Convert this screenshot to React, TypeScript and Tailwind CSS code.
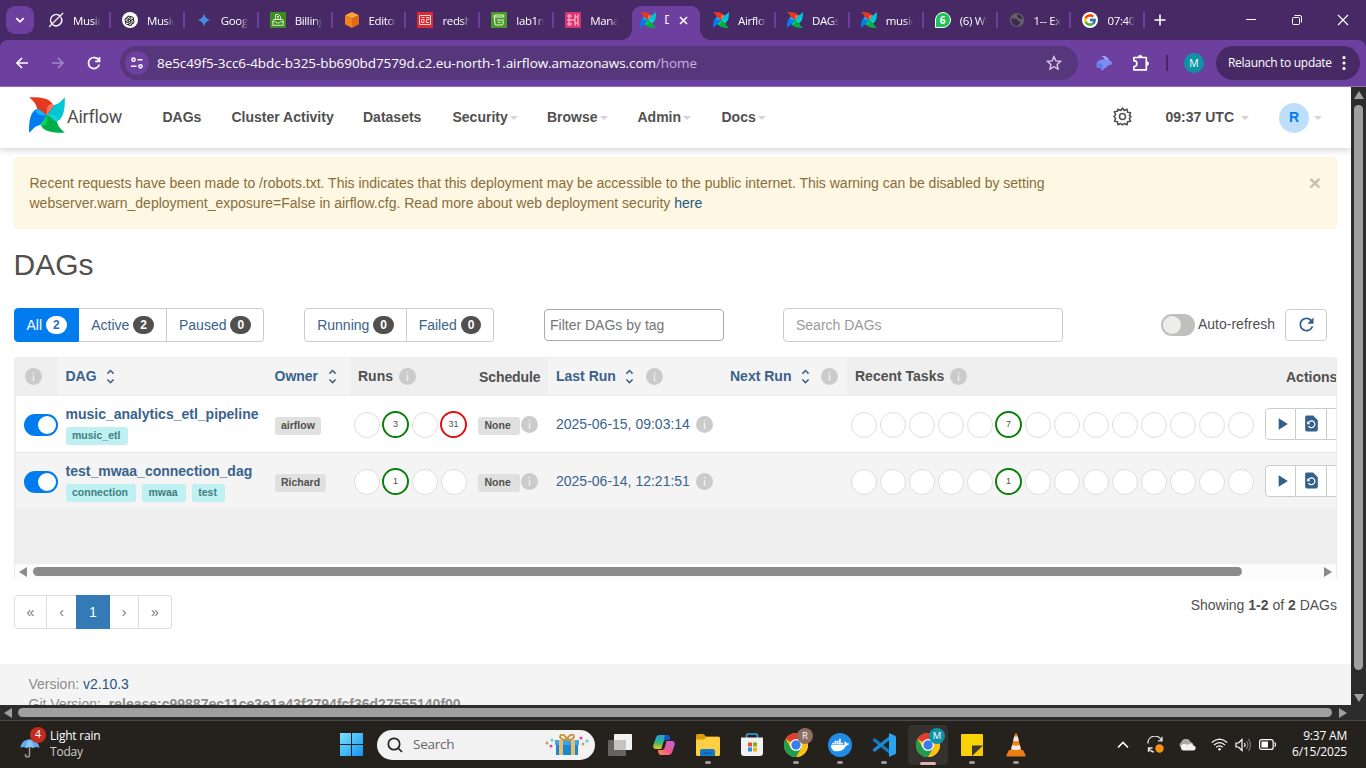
import type { ReactNode } from "react";
import { AiOutlineOpenAI } from "react-icons/ai";
import { FaDocker } from "react-icons/fa";
import { FcGoogle } from "react-icons/fc";
import { MdPlayArrow, MdRefresh, MdRestorePage, MdUnfoldMore } from "react-icons/md";

const blade = "M.2.2C9 0 22 .2 24.600 9L18 18C12 15.500 8.300 13.500 7.500 9.500 6.500 5.500 3.500 3.700.2.2Z";
const facet = "M18.600 9.500C20.500 7 23.500 5.500 24.600 9 22.500 12 20 14 18 18 17.600 14.500 17.800 12 18.600 9.500Z";

function Pinwheel({ className }: { className: string }) {
  return (
    <svg className={className} viewBox="0 0 36 36">
      <path fill="#00c7d4" d={blade} transform="rotate(90 18 18)" />
      <path fill="#00ad46" d={blade} transform="rotate(180 18 18)" />
      <path fill="#017cee" d={blade} transform="rotate(270 18 18)" />
      <path fill="#e43921" d={blade} />
      <path fill="#11d3e0" d={facet} transform="rotate(90 18 18)" />
      <path fill="#04d659" d={facet} transform="rotate(180 18 18)" />
      <path fill="#0cb6ff" d={facet} transform="rotate(270 18 18)" />
      <path fill="#ff7557" d={facet} />
    </svg>
  );
}

/* ---------- browser tabs ---------- */

const pin = <Pinwheel className="size-4" />;

const tabs: { icon: ReactNode; label: string; sep: boolean }[] = [
  {
    icon: (
      <svg className="size-4" viewBox="0 0 16 16" fill="none" stroke="#f2edf7" strokeWidth="1.600" strokeLinecap="round">
        <path d="M12.1 4.100A5.600 5.600 0 0 0 3.900 11.700M13.100 5.600A5.600 5.600 0 0 1 5 12.800" />
        <path d="M1.500 14.500 14.800 1.200" strokeWidth="1.300" />
      </svg>
    ),
    label: "Music",
    sep: true,
  },
  {
    icon: (
      <span className="flex size-4 items-center justify-center rounded-full bg-white text-black">
        <AiOutlineOpenAI className="size-[13px]" />
      </span>
    ),
    label: "Music",
    sep: true,
  },
  {
    icon: (
      <svg className="size-4" viewBox="0 0 16 16">
        <path d="M8 1.200C8.800 5.200 10.800 7.200 14.800 8 10.800 8.800 8.800 10.800 8 14.800 7.200 10.800 5.200 8.800 1.200 8 5.200 7.200 7.200 5.200 8 1.200Z" fill="#4a8ae0" />
      </svg>
    ),
    label: "Goog",
    sep: true,
  },
  {
    icon: (
      <svg className="size-4" viewBox="0 0 16 16" fill="none" stroke="#e6f5dc" strokeWidth="0.9">
        <rect width="16" height="16" fill="#3f8a22" stroke="none" />
        <path d="M5.500 7V2.500h3l2 2V7M3.500 7.500h9l.8 2v3.800H2.700V9.500ZM2.700 9.800h3l1 1.200h2.600l1-1.200h3M7 4.500h2M7 6h2" />
      </svg>
    ),
    label: "Billing",
    sep: true,
  },
  {
    icon: (
      <svg className="size-4" viewBox="0 0 16 16">
        <path d="M8 0 15 3.300 8 6.600 1 3.300Z" fill="#fba53d" />
        <path d="M1 3.300 8 6.600V16L1 12.300Z" fill="#f58220" />
        <path d="M15 3.300 8 6.600V16l7-3.700Z" fill="#dd6b14" />
      </svg>
    ),
    label: "Editor",
    sep: true,
  },
  {
    icon: (
      <svg className="size-4" viewBox="0 0 16 16" fill="none" stroke="#ffe3e3" strokeWidth="0.9">
        <rect width="16" height="16" fill="#d92b32" stroke="none" />
        <path d="M2.500 3.500h11v9h-11ZM4.500 5.500h3M5 7.500h2v3H4.500M9 5.500h3v2H9.500v3H12M4.500 7.500v3" />
      </svg>
    ),
    label: "redsh",
    sep: true,
  },
  {
    icon: (
      <svg className="size-4" viewBox="0 0 16 16" fill="none" stroke="#e6f5dc" strokeWidth="1.100">
        <rect width="16" height="16" fill="#4b9a28" stroke="none" />
        <path d="M3 4q0-1 1.500-1h7Q13 3 13 4T11.500 5h-7Q3 5 3 4ZM3.200 4.500l.8 7q.2 1.500 1.500 1.500h5q1.300 0 1.500-1.500l.2-2.500M6 8h7M7 10.300h2.500" />
      </svg>
    ),
    label: "lab1m",
    sep: true,
  },
  {
    icon: (
      <svg className="size-4" viewBox="0 0 16 16" fill="none" stroke="#ffe0ee" strokeWidth="0.9">
        <rect width="16" height="16" fill="#d8326f" stroke="none" />
        <path d="M10 2v12M13 2v12M10 5h3M10 8H5M10 11h3M3 3h3v2H3ZM3 7h2v2H3ZM3 11h3v2H3Z" />
      </svg>
    ),
    label: "Mana",
    sep: false,
  },
  { icon: pin, label: "DAGs", sep: false },
  { icon: pin, label: "Airflow", sep: true },
  { icon: pin, label: "DAGs", sep: true },
  { icon: pin, label: "music", sep: true },
  {
    icon: (
      <span className="flex size-4 items-center justify-center rounded-full rounded-bl-[3px] border border-white bg-[#1fc256] font-['Open_Sans',sans-serif] text-[10px] leading-none font-bold text-white">
        6
      </span>
    ),
    label: "(6) Wh",
    sep: true,
  },
  {
    icon: (
      <svg className="size-4" viewBox="0 0 16 16">
        <circle cx="8" cy="8" r="7" fill="#64606a" />
        <path d="M2.500 6.500c2-1 3.500.500 5 .500s1 2.500 3 2.500-.500 4-2.500 4.500C4.500 14 2 11 2.500 6.500ZM8 2.500c2-.5 5 1.500 5.500 4C11.500 8 10 6 8.500 5.500Z" fill="#3c2c4c" />
      </svg>
    ),
    label: "1-- Ex",
    sep: true,
  },
  {
    icon: (
      <span className="flex size-4 items-center justify-center rounded-full bg-white">
        <FcGoogle className="size-[14px]" />
      </span>
    ),
    label: "07:40",
    sep: true,
  },
];

function TabStrip() {
  return (
    <div className="flex h-10 items-center bg-[#472a65] pl-1.5 font-['Open_Sans',sans-serif] text-white">
      <div className="flex size-7 items-center justify-center rounded-[9px] bg-[#6d40a0]">
        <svg className="size-3" viewBox="0 0 12 12" fill="none" stroke="white" strokeWidth="1.800">
          <path d="M2.300 4.200 6 7.800l3.700-3.600" />
        </svg>
      </div>
      <div className="ml-[3px] flex h-10">
        {tabs.map((tab, i) =>
          i === 8 ? (
            <div key={i} className="flex h-10 w-[73.9px] items-end pl-[4px]">
              <div className="relative flex h-[34px] w-[68px] items-center rounded-t-[9px] bg-[#6d40a0] pb-[6px] pl-2">
                <span className="absolute bottom-0 -left-2.5 size-2.5 bg-[radial-gradient(circle_at_0_0,transparent_9.500px,#6d40a0_10px)]" />
                <span className="absolute -right-2.5 bottom-0 size-2.5 bg-[radial-gradient(circle_at_100%_0,transparent_9.500px,#6d40a0_10px)]" />
                {tab.icon}
                <span className="ml-[8px] w-[5px] overflow-hidden text-[12px] leading-4">{tab.label}</span>
                <svg className="ml-[10px] size-[9px]" viewBox="0 0 9 9" stroke="white" strokeWidth="1.600">
                  <path d="m1 1 7 7M8 1 1 8" />
                </svg>
              </div>
            </div>
          ) : (
            <div key={i} className="flex h-10 w-[73.9px] items-center pl-[11px]">
              <span className="size-4 shrink-0">{tab.icon}</span>
              <span className="mt-px ml-[9px] w-[27.500px] overflow-hidden text-[11.500px] leading-5 tracking-[-0.35px] whitespace-nowrap [mask-image:linear-gradient(to_right,black_70%,transparent)]">
                {tab.label}
              </span>
              <span className={tab.sep ? "ml-auto h-4 w-0.5 bg-[#6d40a0]" : "hidden"} />
            </div>
          ),
        )}
      </div>
      <svg className="ml-[9px] size-3" viewBox="0 0 12 12" stroke="white" strokeWidth="1.600">
        <path d="M6 .5v11M.5 6h11" />
      </svg>
      <div className="mr-[18px] ml-auto flex items-center gap-[36px]">
        <svg className="size-2.5" viewBox="0 0 10 10" stroke="white">
          <path d="M0 4.500h10" />
        </svg>
        <svg className="size-2.5" viewBox="0 0 10 10" fill="none" stroke="white">
          <rect x=".5" y="2.500" width="7" height="7" rx="1" />
          <path d="M2.500.5H8A1.500 1.500 0 0 1 9.500 2v5.500" />
        </svg>
        <svg className="-mx-px size-3" viewBox="0 0 12 12" stroke="white" strokeWidth="1.200">
          <path d="m1 1 10 10M11 1 1 11" />
        </svg>
      </div>
    </div>
  );
}

function Toolbar() {
  return (
    <div className="bg-[#472a65]">
      <div className="flex h-[47px] items-center rounded-t-lg border-b border-[#8f70b5] bg-[#6d40a0] pl-[15px] font-['Open_Sans',sans-serif] text-white">
        <svg className="size-[14px]" viewBox="0 0 14 14" fill="none" stroke="white" strokeWidth="1.700">
          <path d="M13 7H2.300M7 2 2 7l5 5" />
        </svg>
        <svg className="ml-[22px] size-[14px]" viewBox="0 0 14 14" fill="none" stroke="#a286c6" strokeWidth="1.600">
          <path d="M1 7h10.700M7 2l5 5-5 5" />
        </svg>
        <svg className="ml-[22px] size-[14px]" viewBox="0 0 14 14" fill="none" stroke="white" strokeWidth="1.700">
          <path d="M11.900 4.500A5.500 5.500 0 1 0 12.300 8.500" />
          <path d="M12.500 1v4.300H8.200" />
        </svg>
        <div className="ml-[19px] flex h-[34px] w-[958px] items-center rounded-full bg-[#57377b] pl-[5px]">
          <div className="flex size-6 items-center justify-center rounded-full bg-[#6d40a0]">
            <svg className="size-3.5" viewBox="0 0 14 14" fill="none" stroke="white" strokeWidth="1.500">
              <circle cx="3.500" cy="3.700" r="1.600" />
              <path d="M7.500 3.700H12.500M1 10.300h5.500" />
              <circle cx="10.500" cy="10.300" r="1.600" />
            </svg>
          </div>
          <span className="ml-2 text-[13.5px] leading-5 tracking-[-0.075px] whitespace-nowrap">
            8e5c49f5-3cc6-4bdc-b325-bb690bd7579d.c2.eu-north-1.airflow.amazonaws.com
            <span className="text-[#c6b0e0]">/home</span>
          </span>
          <svg className="mr-[16px] ml-auto size-4" viewBox="0 0 16 16" fill="none" stroke="#d8cde4" strokeWidth="1.400">
            <path d="m8 1.700 1.900 4.200 4.600.5-3.400 3.100.9 4.500-4-2.300L4 14l.9-4.500L1.500 6.400l4.600-.5Z" />
          </svg>
        </div>
        <svg className="ml-[17px] size-[18px]" viewBox="0 0 18 18">
          <path d="M1.500 11C1 7 6 5 10 5.600 9 3.600 8 2.600 6.500 2c4-.6 6.500 1 7.500 4.200 2 .4 3.300 2 3 3.800-1 1-2.500 1-3.500 1-1 2-2.500 3-4.500 3.500 0 1-1.500 2-3.500 2 1-.8 1-2 .5-3-1 .6-3 .8-4.500-.5Z" fill="#7d8bf2" />
          <path d="M10 5.600C9.500 4 8.500 2.500 6.500 2c4-.6 6.500 1 7.500 4.200Z" fill="#a5a5f5" />
          <path d="M3 8.500c3 .5 5 2 6 5.500l-3-1-4.500-.5Z" fill="#5c7ce8" />
        </svg>
        <svg className="mb-px ml-[19px] size-[18px]" viewBox="0 0 18 18" fill="none" stroke="white" strokeWidth="1.700" strokeLinejoin="round">
          <path d="M1.900 6.700V3.500H14.300V15.900H1.900V12.700a3 3 0 0 0 0-6Z" />
          <path d="M6.200 3.200a2 2 0 0 1 4 0ZM14.600 7.600a2 2 0 0 1 0 4Z" fill="white" strokeWidth=".6" />
        </svg>
        <div className="ml-[16px] h-4 w-0.5 bg-[#472a65]" />
        <div className="ml-4 flex size-5 items-center justify-center rounded-full bg-[#0e93a4] text-[10.5px] leading-none">M</div>
        <div className="ml-[12px] flex h-[34px] w-[144px] items-center rounded-full bg-[#472a65] pl-3">
          <span className="text-[12px] leading-5 tracking-[-0.3px] whitespace-nowrap">Relaunch to update</span>
          <svg className="mr-[14px] ml-auto h-4 w-1" viewBox="0 0 4 16" fill="white">
            <circle cx="2" cy="2.600" r="1.600" />
            <circle cx="2" cy="8" r="1.600" />
            <circle cx="2" cy="13.400" r="1.600" />
          </svg>
        </div>
      </div>
    </div>
  );
}

/* ---------- Airflow page ---------- */

function Caret() {
  return <span className="h-0 w-0 border-x-[4px] border-t-[4px] border-x-transparent border-t-[#d9cfd6]" />;
}

function NavItem({ label, width, caret }: { label: string; width: string; caret: boolean }) {
  return (
    <div className={"flex shrink-0 items-center gap-[2px] " + width}>
      <span className="whitespace-nowrap">{label}</span>
      {caret && <Caret />}
    </div>
  );
}

function NavBar() {
  return (
    <header className="relative z-10 flex h-[61px] shrink-0 items-center bg-white text-[14px] font-bold text-[#51504f] shadow-[0_1px_8px_rgba(0,0,0,0.22)]">
      <Pinwheel className="mb-[5px] ml-[29px] size-9" />
      <span className="mb-[3px] ml-[2px] w-[95.500px] font-[Roboto,sans-serif] text-[18px] font-normal tracking-[-0.25px]">Airflow</span>
      <NavItem label="DAGs" width="w-[69px]" caret={false} />
      <NavItem label="Cluster Activity" width="w-[131.500px]" caret={false} />
      <NavItem label="Datasets" width="w-[89.500px]" caret={false} />
      <NavItem label="Security" width="w-[94.500px]" caret />
      <NavItem label="Browse" width="w-[90.500px]" caret />
      <NavItem label="Admin" width="w-[84px]" caret />
      <NavItem label="Docs" width="w-[60px]" caret />
      <svg className="mb-[3px] ml-auto size-[19px]" viewBox="0 0 19 19" fill="none" stroke="#51504f" strokeWidth="1.500" strokeLinejoin="round">
        <path d="m9.500 1 1.700 2.500 2.900-1.300.4 3.100 3.100.4-1.300 2.900L18 9.500l-1.700 1.900 1.300 2.900-3.100.4-.4 3.100-2.900-1.300L9.500 18l-1.700-1.500-2.900 1.300-.4-3.100-3.100-.4 1.300-2.900L1 9.500l1.700-1.900-1.300-2.900 3.100-.4.4-2.100 2.900 1.300Z" />
        <circle cx="9.500" cy="9.500" r="3" />
      </svg>
      <span className="mr-[7px] ml-[34px] whitespace-nowrap">09:37 UTC</span>
      <Caret />
      <span className="mr-[5px] ml-[30px] flex size-[30px] items-center justify-center rounded-full bg-[#bfdefb] text-[14px] text-[#017cee]">R</span>
      <span className="mr-[29px] flex"><Caret /></span>
    </header>
  );
}

function Alert() {
  return (
    <div className="mx-[14px] mt-[9px] flex h-[72px] shrink-0 justify-between rounded-[4px] border border-[#fcf3dc] bg-[#fdf7e3] py-[15px] pr-[15px] pl-[14.500px] text-[14px] leading-5 text-[#8a6d3b]">
      <p>
        Recent requests have been made to /robots.txt. This indicates that this deployment may be accessible to the public internet. This warning can be disabled by setting
        <br />
        webserver.warn_deployment_exposure=False in airflow.cfg. Read more about web deployment security <span className="text-[#285580]">here</span>
      </p>
      <span className="text-[21px] font-bold text-[#c9c1a8]">×</span>
    </div>
  );
}

function FilterButton({ label, count, className, badge }: { label: string; count: number; className: string; badge: string }) {
  return (
    <div className={"flex h-[34px] items-center justify-center gap-[4px] border text-[14px] " + className}>
      <span>{label}</span>
      <span className={"flex h-[18px] w-[20.500px] items-center justify-center rounded-full text-[12px] font-bold " + badge}>{count}</span>
    </div>
  );
}

function Filters() {
  return (
    <div className="mt-[26px] flex h-[34px] shrink-0 items-center pl-[14px] text-[#3a638c]">
      <div className="flex">
        <FilterButton label="All" count={2} className="w-[65px] rounded-l-[4px] border-[#017cee] bg-[#017cee] text-white" badge="bg-white text-[#2a6fb0]" />
        <FilterButton label="Active" count={2} className="w-[88px] border-l-0 border-[#ccc]" badge="bg-[#51504f] text-white" />
        <FilterButton label="Paused" count={0} className="w-[97px] rounded-r-[4px] border-l-0 border-[#ccc]" badge="bg-[#51504f] text-white" />
      </div>
      <div className="ml-10 flex">
        <FilterButton label="Running" count={0} className="w-[103px] rounded-l-[4px] border-[#ccc]" badge="bg-[#51504f] text-white" />
        <FilterButton label="Failed" count={0} className="w-[87px] rounded-r-[4px] border-l-0 border-[#ccc]" badge="bg-[#51504f] text-white" />
      </div>
      <div className="ml-[50px] flex h-8 w-[180px] items-center rounded-[4px] border border-[#aaa] pl-[5px] text-[14px] text-[#757575]">Filter DAGs by tag</div>
      <div className="ml-[59px] flex h-[34px] w-[280px] items-center rounded-[4px] border border-[#ccc] pl-3 text-[14px] text-[#999]">Search DAGs</div>
      <div className="ml-[98px] flex h-[22px] w-[34px] items-center rounded-full bg-[#c0bfbe] pl-[2px]">
        <span className="size-[18px] rounded-full bg-[#ededed]" />
      </div>
      <span className="mb-[2px] ml-[3px] w-[87px] text-[14px] text-[#51504f]">Auto-refresh</span>
      <div className="flex h-8 w-[42px] items-center justify-center rounded-[4px] border border-[#ccc] pb-[2px]">
        <MdRefresh className="size-[21px] text-[#2f5f8f]" />
      </div>
    </div>
  );
}

function Info() {
  return (
    <span className="flex size-[17px] shrink-0 items-center justify-center rounded-full bg-[#cbcbcb]">
      <svg className="h-[9px] w-[3px]" viewBox="0 0 3 9" fill="#f0f0f0">
        <path d="M.8 0h1.400v1.600H.8ZM.8 3h1.400v6H.8Z" />
      </svg>
    </span>
  );
}

function Sort() {
  return <MdUnfoldMore className="size-[19px] shrink-0 text-[#3a638c]" />;
}

function Bubble({ value, tone }: { value?: number; tone?: string }) {
  return value === undefined ? (
    <span className="mx-[1.500px] size-[26px] shrink-0 rounded-full border border-[#dedede] bg-white" />
  ) : (
    <span className={"mx-px flex size-[27px] shrink-0 items-center justify-center rounded-full border-2 bg-white text-[9px] leading-none text-[#51504f] " + tone}>
      {value}
    </span>
  );
}

function Label({ children }: { children: ReactNode }) {
  return <span className="flex h-[18px] shrink-0 items-center rounded-[3px] bg-[#e0e0e0] px-[6px] text-[10.500px] font-bold text-[#51504f]">{children}</span>;
}

interface Dag {
  name: string;
  tags: string[];
  owner: string;
  runs: { value?: number; tone?: string }[];
  last: string;
  tasks: number;
  row: string;
}

const dags: Dag[] = [
  {
    name: "music_analytics_etl_pipeline",
    tags: ["music_etl"],
    owner: "airflow",
    runs: [{}, { value: 3, tone: "border-[#0a800a]" }, {}, { value: 31, tone: "border-[#e01212]" }],
    last: "2025-06-15, 09:03:14",
    tasks: 7,
    row: "border-[#efefef] bg-white",
  },
  {
    name: "test_mwaa_connection_dag",
    tags: ["connection", "mwaa", "test"],
    owner: "Richard",
    runs: [{}, { value: 1, tone: "border-[#0a800a]" }, {}, {}],
    last: "2025-06-14, 12:21:51",
    tasks: 1,
    row: "border-[#e6e6e6] bg-[#f4f4f4]",
  },
];

function DagRow({ dag }: { dag: Dag }) {
  return (
    <div className={"flex h-[57px] w-[1321px] items-center overflow-hidden border-t " + dag.row}>
      <div className="flex w-[42px] shrink-0 pl-[8px]">
        <span className="mt-[2px] flex h-[22px] w-[34px] items-center justify-end rounded-full bg-[#017cee] pr-[2px]">
          <span className="size-[18px] rounded-full bg-white" />
        </span>
      </div>
      <div className="flex w-[209px] shrink-0 flex-col pt-px pl-[7.500px]">
        <span className="h-5 text-[14px] leading-5 font-bold whitespace-nowrap text-[#3a638c]">{dag.name}</span>
        <span className="mt-[3px] flex h-[18px] gap-[6px]">
          {dag.tags.map((t) => (
            <span key={t} className="flex h-[18px] items-center rounded-[3px] bg-[#bff0f2] pr-[8px] pl-[6.500px] text-[10.500px] font-bold text-[#42807f]">
              {t}
            </span>
          ))}
        </span>
      </div>
      <div className="flex w-[85px] shrink-0 pt-[3px] pl-[8px]">
        <Label>{dag.owner}</Label>
      </div>
      <div className="flex w-[118px] shrink-0 items-center pt-px">
        {dag.runs.map((r, i) => (
          <Bubble key={i} value={r.value} tone={r.tone} />
        ))}
      </div>
      <div className="flex w-[78px] shrink-0 items-center pl-[8px]">
        <span className="w-[43px] pt-[3px]">
          <span className="flex h-[18px] w-[42px] items-center rounded-[3px] bg-[#e0e0e0] pl-[6.500px] text-[10.500px] font-bold text-[#51504f]">None</span>
        </span>
        <Info />
      </div>
      <div className="flex w-[299px] shrink-0 items-center gap-[6px] pl-[8px] text-[14px] text-[#3a638c]">
        <span className="w-[134px] whitespace-nowrap">{dag.last}</span>
        <Info />
      </div>
      <div className="flex w-[418px] shrink-0 items-center pt-px pl-[2px]">
        {Array.from({ length: 14 }, (_, i) =>
          i === 5 ? <Bubble key={i} value={dag.tasks} tone="border-[#0a800a]" /> : <Bubble key={i} />,
        )}
      </div>
      <div className="flex shrink-0 text-[#34608d]">
        <span className="flex h-8 w-[31px] items-center justify-center rounded-l-[4px] border border-[#ccc] bg-white pb-px pl-[2px]">
          <MdPlayArrow className="size-[20px]" />
        </span>
        <span className="flex h-8 w-[31px] items-center justify-center border-y border-r border-[#ccc] bg-white pb-px">
          <MdRestorePage className="size-[19px]" />
        </span>
        <span className="h-8 w-[31px] shrink-0 border-y border-[#ccc] bg-white" />
      </div>
    </div>
  );
}

function DagTable() {
  return (
    <div className="mx-[14px] mt-[15px] flex h-[222px] w-[1323px] shrink-0 flex-col overflow-hidden rounded-t-[3px] border-x border-[#ebebeb] bg-[#efefef]">
      <div className="flex h-[38px] shrink-0 items-center text-[14px] font-bold text-[#51504f]">
        <div className="flex w-[43px] shrink-0 pl-[10px]"><Info /></div>
        <div className="my-px flex h-9 w-[292px] shrink-0 items-center bg-[#f4f4f4] pl-[7.500px] text-[#3a638c]">
          <div className="flex w-[209px] items-center gap-[4px]">DAG <Sort /></div>
          <div className="flex items-center gap-[4.500px]">Owner <Sort /></div>
        </div>
        <div className="flex w-[120px] shrink-0 items-center gap-[5.500px] pl-[8px]">Runs <Info /></div>
        <div className="w-[78px] shrink-0 pt-[2px] pl-[9px] tracking-[-0.1px]">Schedule</div>
        <div className="flex h-9 w-[299px] shrink-0 items-center bg-[#f4f4f4] pl-[8px] text-[#3a638c]">
          <div className="flex w-[174px] items-center gap-[4.500px]">Last Run <Sort /><span className="ml-[2px]"><Info /></span></div>
          <div className="flex items-center gap-[4.500px]">Next Run <Sort /><span className="ml-[2px]"><Info /></span></div>
        </div>
        <div className="flex w-[431px] shrink-0 items-center gap-[5.500px] pl-[8px]">Recent Tasks <Info /></div>
        <div className="shrink-0 pt-[2px] pl-[8px]">Actions</div>
      </div>
      <div className="flex flex-col pl-px">
        {dags.map((d) => (
          <DagRow key={d.name} dag={d} />
        ))}
      </div>
      <div className="mt-auto flex h-[15px] shrink-0 items-center bg-[#fcfcfc] pl-[4px]">
        <span className="h-0 w-0 border-y-[5px] border-r-[8px] border-y-transparent border-r-[#8b8b8b]" />
        <span className="ml-[6px] h-[9px] w-[1209px] rounded-full bg-[#8b8b8b]" />
        <span className="mr-[4px] ml-auto h-0 w-0 border-y-[5px] border-l-[8px] border-y-transparent border-l-[#8b8b8b]" />
      </div>
    </div>
  );
}

function Pager() {
  return (
    <div className="mx-[14px] mt-4 flex h-[34px] shrink-0 justify-between text-[14px] text-[#51504f]">
      <div className="flex text-[#777]">
        <span className="flex w-[33px] items-center justify-center rounded-l-[4px] border border-[#ddd]">«</span>
        <span className="flex w-[29px] items-center justify-center border-y border-[#ddd]">‹</span>
        <span className="flex w-[34px] items-center justify-center bg-[#337ab7] text-white">1</span>
        <span className="flex w-[29px] items-center justify-center border-y border-r border-[#ddd]">›</span>
        <span className="flex w-[33px] items-center justify-center rounded-r-[4px] border-y border-r border-[#ddd]">»</span>
      </div>
      <span className="leading-5">
        Showing <b>1-2</b> of <b>2</b> DAGs
      </span>
    </div>
  );
}

function Page() {
  return (
    <div className="flex h-[618px] w-[1351px] flex-col overflow-hidden bg-white font-['Liberation_Sans',sans-serif]">
      <NavBar />
      <Alert />
      <h1 className="mt-[18px] ml-[13.500px] h-[35px] shrink-0 text-[30px] leading-[35px] text-[#51504f]">DAGs</h1>
      <Filters />
      <DagTable />
      <Pager />
      <footer className="mt-[35px] h-[60px] shrink-0 bg-[#f4f4f4] pt-[10px] pl-[28.500px] text-[14px] leading-5 text-[#8d8c8b]">
        <div>
          Version: <span className="text-[#285580]">v2.10.3</span>
        </div>
        <div className="flex gap-[4px]">
          Git Version: <b>.release:c99887ec11ce3e1a43f2794fcf36d27555140f00</b>
        </div>
      </footer>
    </div>
  );
}

/* ---------- taskbar ---------- */

function Chrome() {
  return (
    <svg className="size-6" viewBox="0 0 24 24">
      <circle cx="12" cy="12" r="12" fill="#fbc116" />
      <path d="M12 12 1.600 6A12 12 0 0 1 22.400 6Z" fill="#e33b2e" />
      <path d="M12 6h10.400A12 12 0 0 1 12 24l5.200-9Z" fill="#fbc116" />
      <path d="M12 0A12 12 0 0 1 22.400 6H12Z" fill="#e33b2e" />
      <path d="M1.600 6A12 12 0 0 0 12 24l5.200-9L12 12 6.800 15Z" fill="#1f9d4d" />
      <circle cx="12" cy="12" r="6" fill="white" />
      <circle cx="12" cy="12" r="4.700" fill="#3b7de8" />
    </svg>
  );
}

function AppIcon({ children, mark }: { children: ReactNode; mark?: string }) {
  return (
    <div className="relative flex h-10 w-11 items-center justify-center">
      {children}
      {mark && <span className={"absolute bottom-0 left-1/2 -translate-x-1/2 rounded-full " + mark} />}
    </div>
  );
}

const dot = "mb-[1px] h-[3px] w-[6px] bg-[#9a9896]";

function Taskbar() {
  return (
    <div className="flex h-12 items-center border-t border-[#4b4a48] bg-[#25211d] font-['Open_Sans',sans-serif] text-[12px] text-white">
      <div className="mb-[2px] flex w-[340px] items-center pl-[20px]">
        <div className="relative h-7 w-[26px]">
          <svg className="mt-[7px] size-[21px]" viewBox="0 0 21 21">
            <path d="M9.500 9v9a2 2 0 0 1-4 0v-1" fill="none" stroke="#9a9a9a" strokeWidth="1.500" />
            <path d="M.5 11C1 5 5 2.500 9.500 2.500S19 5 19.500 11c-2-1.500-4-1.500-6 0-2.500-1.500-5-1.500-7.500 0-2-1.500-4-1.500-5.500 0Z" fill="#62abeb" />
            <path d="M6 11c0-4 1.500-7 3.500-8.500 2 1.500 4 4.500 4 8.500-2.500-1.500-5-1.500-7.500 0Z" fill="#8cc6f5" />
          </svg>
          <span className="absolute -top-[3px] left-[10px] flex size-4 items-center justify-center rounded-full bg-[#c42b1c] text-[10.500px] leading-none">4</span>
        </div>
        <div className="ml-[4px] leading-4 tracking-[-0.2px]">
          <div>Light rain</div>
          <div className="text-[#cfcdcb]">Today</div>
        </div>
      </div>
      <svg className="size-[23px]" viewBox="0 0 23 23">
        <defs>
          <linearGradient id="win" x1="0" y1="0" x2="1" y2="1">
            <stop offset="0" stopColor="#7be3fb" />
            <stop offset="1" stopColor="#0f93f5" />
          </linearGradient>
        </defs>
        <path d="M0 0h11v11H0ZM12 0h11v11H12ZM0 12h11v11H0ZM12 12h11v11H12Z" fill="url(#win)" />
      </svg>
      <div className="ml-[14px] flex h-[30px] w-[218px] items-center rounded-full bg-[#f2f2f2] pl-[10px] text-[#666]">
        <svg className="size-4" viewBox="0 0 16 16" fill="none" stroke="#222" strokeWidth="1.700">
          <circle cx="7" cy="7" r="5.700" />
          <path d="m11 11 4 4" />
        </svg>
        <span className="ml-[10px] text-[13.500px] tracking-[-0.25px]">Search</span>
        <svg className="mr-[5px] ml-auto h-[22px] w-[46px]" viewBox="0 0 46 22">
          <path d="M11 6h24v5H11Z" fill="#3aa5e6" />
          <path d="M12 11h22v10H12Z" fill="#1c86d1" />
          <path d="M15 6h4v15h-4ZM27 6h4v15h-4Z" fill="#e8be6a" />
          <path d="M23 6C18 6 15 4 16.500 1.500S22 2 23 6c1-4 5-7 6.500-4.500S28 6 23 6Z" fill="none" stroke="#c8923c" strokeWidth="1.900" />
          <circle cx="3" cy="9" r="1.500" fill="#c8a05a" />
          <circle cx="8" cy="6" r="1.600" fill="#5ccfe0" />
          <circle cx="7" cy="12" r="1.600" fill="#dd4aa0" />
          <circle cx="37" cy="4" r="1.600" fill="#dd4aa0" />
          <circle cx="43" cy="7" r="1.600" fill="#5ccfe0" />
          <circle cx="39" cy="10" r="1.500" fill="#c8a05a" />
        </svg>
      </div>
      <div className="ml-[3px] flex">
        <AppIcon>
          <svg className="h-[22px] w-6" viewBox="0 0 24 22">
            <rect x="6" width="18" height="16" rx="1" fill="#f2f2f2" />
            <rect y="6" width="18" height="16" rx="1" fill="#666462" />
            <rect x="6" y="6" width="12" height="10" fill="#c4c3c2" />
          </svg>
        </AppIcon>
        <AppIcon>
          <svg className="size-[22px]" viewBox="0 0 22 22">
            <defs>
              <linearGradient id="cpa" x1="0" y1="0" x2="0" y2="1">
                <stop offset="0" stopColor="#1f9fe8" />
                <stop offset=".55" stopColor="#3bb878" />
                <stop offset="1" stopColor="#f0c814" />
              </linearGradient>
              <linearGradient id="cpb" x1="1" y1="0" x2="0" y2="1">
                <stop offset="0" stopColor="#b667e8" />
                <stop offset=".55" stopColor="#f0568c" />
                <stop offset="1" stopColor="#fb9452" />
              </linearGradient>
            </defs>
            <path d="M6.500 1H14c1.500 0 2.200 1 2.600 2.500L17.200 6H13c-1.500 0-2 1-2.500 2.500L8.500 15H3C.5 15-.2 13 .4 11L2.800 4C3.500 2 4.500 1 6.500 1Z" fill="url(#cpa)" />
            <path d="M12 1h2c1.500 0 2.200 1 2.600 2.500L17.200 6H13c-1.500 0-2 1-2.500 2.500Z" fill="#1c4fc0" />
            <path d="M15.500 21H8c-1.500 0-2.200-1-2.600-2.500L4.800 16H9c1.500 0 2-1 2.500-2.500L13.500 7H19c2.500 0 3.200 2 2.600 4l-2.400 7c-.7 2-1.700 3-3.700 3Z" fill="url(#cpb)" />
            <path d="M10.300 8.500h2.700L11.500 13.500 10.500 15H8.400Z" fill="#25211d" />
          </svg>
        </AppIcon>
        <AppIcon mark={dot}>
          <svg className="h-[22px] w-6" viewBox="0 0 24 22">
            <path d="M0 1.500Q0 0 1.500 0h6L10 2.500H22.500Q24 2.500 24 4v8H0Z" fill="#dd9a10" />
            <path d="M0 5.500h8L10.500 3H22.500Q24 3 24 4.500V20.500Q24 22 22.500 22H1.500Q0 22 0 20.500Z" fill="#fccf45" />
            <path d="M4 22V17Q4 15 6 15H17q2 0 2 2v5Z" fill="#1779c9" />
            <path d="M7.500 18.500h8v1.500h-8Z" fill="#0b5ca5" />
          </svg>
        </AppIcon>
        <AppIcon>
          <svg className="h-6 w-6" viewBox="0 0 24 24">
            <path d="M6.500 6V2.500q0-1.500 1.500-1.500h8q1.500 0 1.500 1.500V6" fill="none" stroke="#32a5dd" strokeWidth="1.700" />
            <path d="M1 4.500h22V20q0 3-3 3H4q-3 0-3-3Z" fill="#f1f1f3" />
            <path d="M8 9.500h4v4H8Z" fill="#e0502c" />
            <path d="M13 9.500h4v4h-4Z" fill="#78b511" />
            <path d="M8 14.500h4v4H8Z" fill="#1d94dc" />
            <path d="M13 14.500h4v4h-4Z" fill="#f6b012" />
          </svg>
        </AppIcon>
        <AppIcon mark={dot}>
          <Chrome />
          <span className="absolute top-[3px] right-[5px] flex size-4 items-center justify-center rounded-full bg-[#8c6e63] text-[9.500px] leading-none">R</span>
        </AppIcon>
        <AppIcon mark={dot}>
          <span className="flex size-6 items-center justify-center rounded-full bg-[#1f8de8]">
            <FaDocker className="size-[18px]" />
          </span>
        </AppIcon>
        <AppIcon mark={dot}>
          <svg className="size-6" viewBox="0 0 24 24">
            <path d="M2.500 7 17.500 19" stroke="#1478be" strokeWidth="3.400" strokeLinecap="round" />
            <path d="M2.500 17 17.500 5" stroke="#1b8ad6" strokeWidth="3.400" strokeLinecap="round" />
            <path d="M17 0l6 2.700q1 .5 1 1.500v15.600q0 1-1 1.500L17 24Z" fill="#2ba3ee" />
          </svg>
        </AppIcon>
        <div className="mx-[2px] w-10 rounded-[4px] bg-[#35312e]">
          <div className="-mx-[2px]">
            <AppIcon mark="h-[3px] w-4 bg-[#e3b4b5]">
              <Chrome />
              <span className="absolute top-[3px] right-[5px] flex size-4 items-center justify-center rounded-full bg-[#0e93a4] text-[9.500px] leading-none">M</span>
            </AppIcon>
          </div>
        </div>
        <AppIcon mark={dot}>
          <svg className="size-[22px]" viewBox="0 0 22 22">
            <path d="M1 0h20q1 0 1 1v11L12 22H1q-1 0-1-1V1Q0 0 1 0Z" fill="#fbd304" />
            <path d="M11 22V11.500H22V21q0 1-1 1Z" fill="#3c3a38" />
            <path d="M22 11.500 11 22h10q1 0 1-1Z" fill="#fbc804" />
          </svg>
        </AppIcon>
        <AppIcon mark={dot}>
          <svg className="h-6 w-5" viewBox="0 0 20 24">
            <path d="M3 17h14l2.500 5q.5 1.500-1 1.500h-17Q0 23.500.5 22Z" fill="#ee7a12" />
            <path d="M9 .5h2L15.500 18q-5.500 3-11 0Z" fill="#f08214" />
            <path d="M8.300 3.500h3.400l1.100 4.300q-2.800 1-5.600 0ZM6.200 12q3.800 1.500 7.600 0l1 4q-4.800 2-9.600 0Z" fill="#ececec" />
          </svg>
        </AppIcon>
      </div>
      <div className="mr-[19px] ml-auto flex items-center">
        <svg className="size-3" viewBox="0 0 12 12" fill="none" stroke="white" strokeWidth="1.600">
          <path d="M1 8.500 6 3.500l5 5" />
        </svg>
        <svg className="ml-[18px] size-[17px]" viewBox="0 0 17 17" fill="none" stroke="#e8e8e8" strokeWidth="1.300">
          <path d="M1 7.500A7 7 0 0 1 14.500 4.500M15 .8v4h-4M1.500 16v-4h4M1.800 12.500q1.500 3 5 3.500" />
          <circle cx="12.500" cy="12.500" r="4.200" fill="#f7930f" stroke="none" />
        </svg>
        <svg className="ml-[15px] h-3 w-[17px]" viewBox="0 0 17 12">
          <path d="M4 9A3 3 0 0 1 2 3.500 5 5 0 0 1 11.500 3q3 .5 3 4Z" fill="#a9a8a7" />
          <path d="M4.500 11.500a3.300 3.300 0 0 1-.3-6.400Q7 4.500 8.500 6 13 3 14 6.500q3 .3 2.700 3Q16.300 11.500 14.500 11.500Z" fill="#f2f2f2" />
        </svg>
        <svg className="ml-[15px] h-[13px] w-[17px]" viewBox="0 0 17 13" fill="none" stroke="white" strokeWidth="1.200">
          <path d="M.8 4.500q7.700-6.800 15.400 0M3 7q5.500-4.800 11 0M5.200 9.300q3.300-2.800 6.600 0" />
          <circle cx="8.500" cy="11.300" r="1.200" fill="white" stroke="none" />
        </svg>
        <svg className="ml-[7px] h-[14px] w-[17px]" viewBox="0 0 17 14" fill="none" stroke="white" strokeWidth="1.200">
          <path d="M1 5h2.500L7 1.500v11L3.500 9H1ZM9.500 5q1.300 2 0 4" />
          <path d="M11.500 3q2.700 4 0 8M13.500 1.200q4 5.800 0 11.600" stroke="#7a7876" />
        </svg>
        <svg className="ml-[7px] h-[11px] w-[17px]" viewBox="0 0 17 11" fill="none" stroke="white" strokeWidth="1.200">
          <rect x=".6" y=".6" width="13.500" height="9.800" rx="2" />
          <path d="M15.500 3.500q1 .3 1 2t-1 2" />
          <path d="M2.500 2.500h6.500v6H2.500Z" fill="white" stroke="none" />
        </svg>
        <div className="mb-[2px] ml-[10px] w-[61px] text-right leading-4 tracking-[-0.2px] whitespace-nowrap">
          <div>9:37 AM</div>
          <div>6/15/2025</div>
        </div>
      </div>
    </div>
  );
}

export default function App() {
  return (
    <div className="flex h-[768px] w-[1366px] flex-col overflow-hidden">
      <TabStrip />
      <Toolbar />
      <div className="flex bg-[#2c2c2c]">
        <Page />
        <div className="flex h-[618px] w-[15px] flex-col items-center pt-[4px] pb-[3px]">
          <span className="h-0 w-0 border-x-[5px] border-b-[8px] border-x-transparent border-b-[#9f9f9f]" />
          <span className="mt-[6px] h-[565px] w-[9px] rounded-full bg-[#9f9f9f]" />
          <span className="mt-auto h-0 w-0 border-x-[5px] border-t-[8px] border-x-transparent border-t-[#9f9f9f]" />
        </div>
      </div>
      <div className="flex h-[15px] items-center bg-[#2c2c2c] pl-[4px]">
        <span className="h-0 w-0 border-y-[5px] border-r-[8px] border-y-transparent border-r-[#9f9f9f]" />
        <span className="ml-[6px] h-[9px] w-[1314px] rounded-full bg-[#9f9f9f]" />
        <span className="ml-[7px] h-0 w-0 border-y-[5px] border-l-[8px] border-y-transparent border-l-[#9f9f9f]" />
      </div>
      <Taskbar />
    </div>
  );
}
